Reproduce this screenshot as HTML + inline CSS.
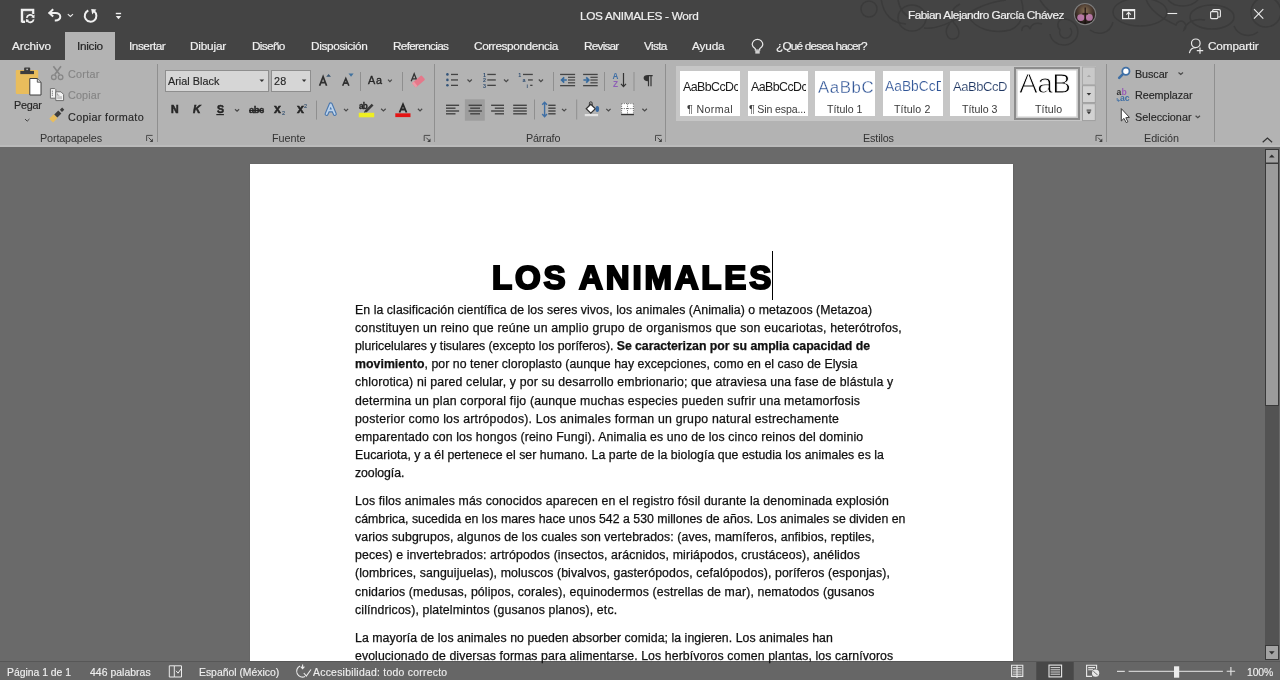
<!DOCTYPE html><html><head><meta charset="utf-8">
<style>
*{margin:0;padding:0;box-sizing:border-box}
html,body{width:1280px;height:680px;overflow:hidden;background:#6a6a6a;font-family:"Liberation Sans",sans-serif}
.a{position:absolute}
.t{position:absolute;white-space:nowrap;line-height:1;will-change:transform}
#titlebar{left:0;top:0;width:1280px;height:60px;background:#444444}
#ribbon{left:0;top:60px;width:1280px;height:87px;background:#b3b3b3}
#doc{left:0;top:147px;width:1265px;height:514px;background:#6a6a6a}
#page{left:250px;top:164px;width:763px;height:497px;background:#fff;box-shadow:0 0 1.5px 0.5px rgba(0,0,0,0.18)}
#status{left:0;top:661px;width:1280px;height:19px;background:#666666;border-top:1px solid #575757}
.tab{color:#f0f0f0;font-size:11.8px;-webkit-text-stroke:0.2px #f0f0f0}
.rb{color:#262626;font-size:10.8px;-webkit-text-stroke:0.15px #262626}
.dis{color:#858585;-webkit-text-stroke:0.15px #858585}
.gl{color:#333333;font-size:10.8px}
.body{color:#101010;font-size:12.3px;-webkit-text-stroke:0.25px #101010}
#lines{will-change:transform;position:absolute;left:0;top:0;width:1280px;height:680px}
.st{color:#efefef;font-size:10.4px;-webkit-text-stroke:0.15px #efefef}
.box{position:absolute;background:#d6d6d6;border:1px solid #8e8e8e}
.tile{position:absolute;background:#fff;width:60px;height:45px;top:71px}
.sn{color:#3a3a3a;font-size:10.6px}
.smp{font-size:12.4px;color:#1a1a1a}
</style></head><body>
<div id="titlebar" class="a"></div>
<svg class="a" style="left:0;top:0" width="1280" height="60" viewBox="0 0 1280 60">
<g fill="none" stroke="#3b3b3b" stroke-width="1.5">
<circle cx="869" cy="9" r="8"></circle>
<path d="M881,-2 C883,14 892,23 906,24"></path>
<ellipse cx="912" cy="18" rx="14" ry="13"></ellipse>
<path d="M898,0 C900,10 905,16 912,18"></path>
<path d="M950,23 C943,31 947,40 954,39 C960,38 961,30 954,23 C948,16 952,8 960,4"></path>
<path d="M924,28 C940,30 958,18 978,8 C988,3 998,1 1006,0"></path>
<path d="M968,16 C976,30 994,34 1010,30 C1021,26 1026,14 1021,-1"></path>
<path d="M1022,31 A4,4 0 1 1 1030,29 C1031,24 1036,22 1042,24"></path>
<path d="M1050,34 A14,13 0 1 0 1064,19 C1058,19 1056,25 1060,30 A6,6 0 1 0 1070,28"></path>
<path d="M1040,0 C1046,10 1054,16 1064,19"></path>
<ellipse cx="1140" cy="12" rx="27" ry="14"></ellipse>
<path d="M1146,-1 C1150,12 1165,20 1176,25 A5,5 0 1 1 1184,30 C1186,22 1195,18 1205,20"></path>
<ellipse cx="1212" cy="17" rx="22" ry="12"></ellipse>
<path d="M1168,0 C1175,8 1190,8 1198,0"></path>
<circle cx="1266" cy="12" r="15"></circle>
<path d="M1234,26 C1238,36 1250,38 1258,32"></path>
<path d="M1090,30 C1098,36 1110,34 1113,22"></path>
</g>
</svg>

<div id="ribbon" class="a"></div>
<div id="doc" class="a"></div>
<div class="a" style="left:0;top:145px;width:1280px;height:1.5px;background:#bbbbbb"></div>
<div id="page" class="a"></div>
<div id="status" class="a"></div>

<!-- tabs -->
<div class="a" style="left:65px;top:32px;width:50px;height:28px;background:#b3b3b3"></div>
<div class="t tab" style="left: 12px; top: 41px; letter-spacing: -0.041px;">Archivo</div>
<div class="t tab" style="left: 76.5px; top: 41px; color: rgb(38, 38, 38); -webkit-text-stroke: 0.2px rgb(38, 38, 38); letter-spacing: -0.289px;">Inicio</div>
<div class="t tab" style="left: 128.5px; top: 41px; letter-spacing: -0.457px;">Insertar</div>
<div class="t tab" style="left: 190.4px; top: 41px; letter-spacing: -0.196px;">Dibujar</div>
<div class="t tab" style="left: 251.6px; top: 41px; letter-spacing: -0.667px;">Diseño</div>
<div class="t tab" style="left: 310.9px; top: 41px; letter-spacing: -0.353px;">Disposición</div>
<div class="t tab" style="left: 392.8px; top: 41px; letter-spacing: -0.705px;">Referencias</div>
<div class="t tab" style="left: 474px; top: 41px; letter-spacing: -0.389px;">Correspondencia</div>
<div class="t tab" style="left: 584.1px; top: 41px; letter-spacing: -0.783px;">Revisar</div>
<div class="t tab" style="left: 643.8px; top: 41px; letter-spacing: -0.654px;">Vista</div>
<div class="t tab" style="left: 692px; top: 41px; letter-spacing: -0.162px;">Ayuda</div>
<div class="t tab" style="left: 776.3px; top: 41px; letter-spacing: -0.799px;">¿Qué desea hacer?</div>
<div class="t tab" style="left: 1207.8px; top: 40.8px; letter-spacing: -0.15px;">Compartir</div>

<!-- title -->
<div class="t tab" style="left: 580.4px; top: 11px; letter-spacing: -0.314px;">LOS ANIMALES - Word</div>
<div class="t tab" style="left: 908px; top: 9.8px; letter-spacing: -0.486px;">Fabian Alejandro García Chávez</div>

<!-- ribbon: clipboard -->
<div class="t rb" style="left: 13.8px; letter-spacing: -0.253px; top: 100px;">Pegar</div>
<div class="t rb dis" style="left: 67.9px; letter-spacing: 0.26px; top: 68.6px;">Cortar</div>
<div class="t rb dis" style="left: 67.9px; letter-spacing: 0.158px; top: 90px;">Copiar</div>
<div class="t rb" style="left: 67.9px; letter-spacing: 0.329px; top: 111.9px;">Copiar formato</div>
<div class="t gl" style="left: 39.7px; letter-spacing: -0.14px; top: 133.1px;">Portapapeles</div>

<!-- font -->
<div class="box" style="left:165px;top:70px;width:104px;height:22px"></div>
<div class="box" style="left:271px;top:70px;width:40px;height:22px"></div>
<div class="t rb" style="left: 167.8px; letter-spacing: 0.028px; top: 75.9px;">Arial Black</div>
<div class="t rb" style="left: 273.9px; letter-spacing: 0.184px; top: 75.9px;">28</div>
<div class="t gl" style="left: 272.1px; letter-spacing: -0.045px; top: 133.3px;">Fuente</div>
<div class="t gl" style="left: 526px; letter-spacing: -0.168px; top: 133.1px;">Párrafo</div>

<!-- styles -->
<div class="a" style="left:676px;top:66px;width:420px;height:55px;background:#c6c6c6"></div>
<div class="tile" style="left:680px"></div>
<div class="tile" style="left:748px"></div>
<div class="tile" style="left:815px"></div>
<div class="tile" style="left:883px"></div>
<div class="tile" style="left:950px"></div>
<div class="a" style="left:1014px;top:67px;width:66px;height:53px;background:#fff;border:2px solid #8c8c8c;box-shadow:inset 0 0 0 1.6px #cccccc"></div>
<div class="t sn" style="left: 687.3px; letter-spacing: 0.417px; top: 104.3px;">¶ Normal</div>
<div class="t sn" style="left: 749.2px; letter-spacing: -0.142px; top: 104.3px;">¶ Sin espa...</div>
<div class="t sn" style="left: 826.9px; letter-spacing: 0.022px; top: 104.3px;">Título 1</div>
<div class="t sn" style="left: 894.3px; letter-spacing: 0.151px; top: 104.3px;">Título 2</div>
<div class="t sn" style="left: 962.2px; letter-spacing: 0.022px; top: 104.3px;">Título 3</div>
<div class="t sn" style="left: 1034.7px; letter-spacing: 0.14px; top: 104.3px;">Título</div>
<div class="a" style="left:683px;top:76px;width:55px;height:20px;overflow:hidden"><div class="t smp" style="left: 0px; letter-spacing: -0.573px; top: 5px;">AaBbCcDc</div></div>
<div class="a" style="left:751px;top:76px;width:55px;height:20px;overflow:hidden"><div class="t smp" style="left: 0px; letter-spacing: -0.573px; top: 5px;">AaBbCcDc</div></div>
<div class="a" style="left:818px;top:74px;width:55.5px;height:22px;overflow:hidden"><div class="t smp" style="left: 0px; font-size: 16.8px; color: rgb(47, 84, 150); -webkit-text-stroke: 0.3px rgb(255, 255, 255); letter-spacing: 0.607px; top: 5.7px;">AaBbCc</div></div>
<div class="a" style="left:885px;top:76px;width:55.5px;height:20px;overflow:hidden"><div class="t smp" style="left: 0px; font-size: 13.8px; color: rgb(47, 84, 150); -webkit-text-stroke: 0.2px rgb(255, 255, 255); letter-spacing: 0.004px; top: 3.8px;">AaBbCcD</div></div>
<div class="a" style="left:953px;top:76px;width:55px;height:20px;overflow:hidden"><div class="t smp" style="left: 0px; font-size: 13px; color: rgb(31, 55, 99); -webkit-text-stroke: 0.15px rgb(255, 255, 255); letter-spacing: -0.446px; top: 3.8px;">AaBbCcD</div></div>
<div class="a" style="left:1018px;top:71px;width:54px;height:24px;overflow:hidden"><div class="t smp" style="left: 1.2px; letter-spacing: -0.6px; font-size: 28.2px; color: rgb(0, 0, 0); -webkit-text-stroke: 0.9px rgb(255, 255, 255); top: -2px;">AaBb</div></div>
<div class="t gl" style="left: 863px; letter-spacing: -0.135px; top: 133.2px;">Estilos</div>

<!-- editing -->
<div class="t rb" style="left: 1135.2px; letter-spacing: -0.082px; top: 69px;">Buscar</div>
<div class="t rb" style="left: 1135.2px; letter-spacing: -0.08px; top: 90.1px;">Reemplazar</div>
<div class="t rb" style="left: 1135.2px; letter-spacing: 0.008px; top: 111.7px;">Seleccionar</div>
<div class="t gl" style="left: 1143.6px; letter-spacing: -0.07px; top: 133.3px;">Edición</div>

<!-- status -->
<div class="t st" style="left: 6.9px; letter-spacing: -0.012px; top: 668.3px;">Página 1 de 1</div>
<div class="t st" style="left: 90px; letter-spacing: 0.046px; top: 668.3px;">446 palabras</div>
<div class="t st" style="left: 198.8px; letter-spacing: -0.005px; top: 668.3px;">Español (México)</div>
<div class="t st" style="left: 312.8px; letter-spacing: 0.261px; top: 668.3px;">Accesibilidad: todo correcto</div>
<div class="t st" style="left: 1247.1px; letter-spacing: -0.126px; top: 668.3px;">100%</div>

<!-- font glyphs -->
<div class="t rb" style="left: 170.8px; font-weight: bold; font-size: 10.6px; -webkit-text-stroke: 0.55px rgb(38, 38, 38); letter-spacing: 1.144px; top: 104px;">N</div>
<div class="t rb" style="left: 193.4px; font-weight: bold; font-style: italic; font-size: 10.6px; -webkit-text-stroke: 0.55px rgb(38, 38, 38); letter-spacing: 0.544px; top: 104px;">K</div>
<div class="t rb" style="left: 217.1px; font-weight: bold; font-size: 10.6px; -webkit-text-stroke: 0.5px rgb(38, 38, 38); letter-spacing: -0.278px; top: 104px;">S</div>
<div class="t rb" style="left: 249.1px; font-weight: bold; font-size: 9.4px; letter-spacing: -0.428px; text-decoration: line-through; -webkit-text-stroke: 0.4px rgb(38, 38, 38); top: 105px;">abc</div>
<div class="t rb" style="left: 274.3px; font-weight: bold; font-size: 12.4px; -webkit-text-stroke: 0.5px rgb(38, 38, 38); letter-spacing: 0.194px; top: 103px;">x</div>
<div class="t rb" style="left: 281.9px; font-size: 5.6px; color: rgb(61, 111, 165); letter-spacing: 0.775px; top: 110.8px;">2</div>
<div class="t rb" style="left: 296.6px; font-weight: bold; font-size: 12.4px; -webkit-text-stroke: 0.5px rgb(38, 38, 38); letter-spacing: 0.094px; top: 103px;">x</div>
<div class="t rb" style="left: 304.2px; font-size: 5.6px; color: rgb(61, 111, 165); letter-spacing: 0.375px; top: 103.7px;">2</div>
<div class="t rb" style="left: 367.7px; font-size: 10.8px; -webkit-text-stroke: 0.35px rgb(38, 38, 38); letter-spacing: 0.781px; top: 74.8px;">Aa</div>
<div class="t rb" style="left: 358.6px; font-weight: bold; font-size: 8.2px; letter-spacing: -0.8px; -webkit-text-stroke: 0.3px rgb(38, 38, 38); top: 102.7px;">ab</div>

<!-- heading -->
<div class="t" id="head" style="left: 492.4px; font-size: 33px; font-weight: bold; color: rgb(0, 0, 0); -webkit-text-stroke: 2.1px rgb(0, 0, 0); letter-spacing: 2.825px; top: 260.6px;">LOS ANIMALES</div>
<div class="a" style="left:772px;top:251px;width:1px;height:49px;background:#000"></div>

<!-- page text -->
<div id="lines">
<div class="t body" style="left: 355.4px; top: 304px; letter-spacing: 0.069px;">En la clasificación científica de los seres vivos, los animales (Animalia) o metazoos (Metazoa)</div>
<div class="t body" style="left: 355.4px; top: 322.1px; letter-spacing: 0.204px;">constituyen un reino que reúne un amplio grupo de organismos que son eucariotas, heterótrofos,</div>
<div class="t body" style="left: 355.4px; top: 340.2px; letter-spacing: -0.04px;">pluricelulares y tisulares (excepto los poríferos). <b>Se caracterizan por su amplia capacidad de</b></div>
<div class="t body" style="left: 355.4px; top: 358.3px; letter-spacing: 0.048px;"><b>movimiento</b>, por no tener cloroplasto (aunque hay excepciones, como en el caso de Elysia</div>
<div class="t body" style="left: 355.4px; top: 376.4px; letter-spacing: 0.148px;">chlorotica) ni pared celular, y por su desarrollo embrionario; que atraviesa una fase de blástula y</div>
<div class="t body" style="left: 355.4px; top: 394.5px; letter-spacing: 0.191px;">determina un plan corporal fijo (aunque muchas especies pueden sufrir una metamorfosis</div>
<div class="t body" style="left: 355.4px; top: 412.6px; letter-spacing: 0.227px;">posterior como los artrópodos). Los animales forman un grupo natural estrechamente</div>
<div class="t body" style="left: 355.4px; top: 430.7px; letter-spacing: 0.127px;">emparentado con los hongos (reino Fungi). Animalia es uno de los cinco reinos del dominio</div>
<div class="t body" style="left: 355.4px; top: 448.8px; letter-spacing: 0.048px;">Eucariota, y a él pertenece el ser humano. La parte de la biología que estudia los animales es la</div>
<div class="t body" style="left: 355.4px; top: 466.9px; letter-spacing: -0.065px;">zoología.</div>
<div class="t body" style="left: 355.4px; top: 495px; letter-spacing: 0.124px;">Los filos animales más conocidos aparecen en el registro fósil durante la denominada explosión</div>
<div class="t body" style="left: 355.4px; top: 513.1px; letter-spacing: 0.016px;">cámbrica, sucedida en los mares hace unos 542 a 530 millones de años. Los animales se dividen en</div>
<div class="t body" style="left: 355.4px; top: 531.2px; letter-spacing: 0.09px;">varios subgrupos, algunos de los cuales son vertebrados: (aves, mamíferos, anfibios, reptiles,</div>
<div class="t body" style="left: 355.4px; top: 549.3px; letter-spacing: 0.129px;">peces) e invertebrados: artrópodos (insectos, arácnidos, miriápodos, crustáceos), anélidos</div>
<div class="t body" style="left: 355.4px; top: 567.4px; letter-spacing: 0.104px;">(lombrices, sanguijuelas), moluscos (bivalvos, gasterópodos, cefalópodos), poríferos (esponjas),</div>
<div class="t body" style="left: 355.4px; top: 585.5px; letter-spacing: 0.122px;">cnidarios (medusas, pólipos, corales), equinodermos (estrellas de mar), nematodos (gusanos</div>
<div class="t body" style="left: 355.4px; top: 603.6px; letter-spacing: 0.135px;">cilíndricos), platelmintos (gusanos planos), etc.</div>
<div class="t body" style="left: 355.4px; top: 631.7px; letter-spacing: 0.05px;">La mayoría de los animales no pueden absorber comida; la ingieren. Los animales han</div>
<div class="t body" style="left: 355.4px; top: 649.8px; letter-spacing: 0.091px;">evolucionado de diversas formas para alimentarse. Los herbívoros comen plantas, los carnívoros</div>

</div>

<!-- icons -->
<svg class="a" style="left:0;top:0" width="1280" height="680" viewBox="0 0 1280 680">
<!-- QAT -->
<g fill="none" stroke="#f0f0f0" stroke-width="2.4">
<path d="M22,22.6 V10 H33.1 V14"></path>
<path d="M22,21.8 H25"></path>
</g>
<rect x="24.2" y="11.3" width="7.5" height="2.8" fill="none" stroke="#5e5e5e" stroke-width="0.8"></rect>
<circle cx="30.2" cy="18.6" r="5.3" fill="#444"></circle>
<g fill="none" stroke="#f0f0f0" stroke-width="1.8">
<path d="M26.7,17.8 A3.6,3.6 0 0 1 33.3,16.6"></path>
<path d="M33.7,19.4 A3.6,3.6 0 0 1 27.1,20.6"></path>
</g>
<path d="M34.6,14.6 L34.4,18.2 L31.2,17.3 Z" fill="#f0f0f0"></path>
<path d="M25.8,22.6 L26,19 L29.2,19.9 Z" fill="#f0f0f0"></path>
<g fill="none" stroke="#f0f0f0" stroke-width="2" stroke-linejoin="miter">
<path d="M48.8,12.9 H55.6 A4.7,3.8 0 0 1 55.6,20.5 H54.8"></path>
<path d="M53.2,9.2 L49.3,12.9 L53.2,16.6"></path>
</g>
<path d="M67.8,14.1 L70.4,16.5 L73,14.1" fill="none" stroke="#e8e8e8" stroke-width="1.1"></path>
<path d="M88.3,10.5 A5.8,5.8 0 1 0 94.2,11.3" fill="none" stroke="#f0f0f0" stroke-width="2"></path>
<path d="M91.2,9.1 L96.4,9.5 L92.2,14.4 Z" fill="#f0f0f0"></path>
<rect x="115.8" y="12.8" width="5.3" height="1.4" fill="#f0f0f0"></rect>
<path d="M115.8,16 H121.2 L118.5,19.2 Z" fill="#f0f0f0"></path>
<!-- avatar -->
<defs><radialGradient id="avg" cx="0.5" cy="0.35" r="0.6"><stop offset="0" stop-color="#8b7355"></stop><stop offset="0.6" stop-color="#4a3a30"></stop><stop offset="1" stop-color="#1e1816"></stop></radialGradient></defs>
<circle cx="1085" cy="14.1" r="11.2" fill="#7e7e7e"></circle>
<circle cx="1085" cy="14.1" r="10.2" fill="url(#avg)"></circle>
<ellipse cx="1080.8" cy="17.6" rx="3.6" ry="3.4" fill="#c982b8" opacity="0.85"></ellipse>
<ellipse cx="1089.4" cy="17.4" rx="3.4" ry="3.4" fill="#c982b8" opacity="0.85"></ellipse>
<path d="M1085.2,7.5 V23.5 M1082.4,13.8 H1088" stroke="#1c1010" stroke-width="1.2"></path>
<!-- window controls -->
<rect x="1122.6" y="9.6" width="12" height="9" fill="none" stroke="#eaeaea" stroke-width="1.2"></rect>
<rect x="1122.6" y="9.2" width="12" height="2" fill="#eaeaea"></rect>
<path d="M1128.6,12.5 V18.5 M1126.4,14.6 L1128.6,12.4 L1130.8,14.6" fill="none" stroke="#eaeaea" stroke-width="1.1"></path>
<path d="M1167.5,13.5 H1177.2" stroke="#eaeaea" stroke-width="1.1"></path>
<rect x="1210.6" y="11.6" width="7.2" height="7" rx="1" fill="none" stroke="#eaeaea" stroke-width="1.1"></rect>
<path d="M1212.6,11.4 V10.8 Q1212.6,9.6 1213.8,9.6 H1219 Q1220.4,9.6 1220.4,11 V16 Q1220.4,17 1219.4,17 H1218" fill="none" stroke="#eaeaea" stroke-width="1.1"></path>
<path d="M1254,9.2 L1263.3,18.6 M1263.3,9.2 L1254,18.6" stroke="#eaeaea" stroke-width="1.15"></path>
<!-- lightbulb -->
<g fill="none" stroke="#e8e8e8" stroke-width="1.2">
<path d="M755.3,50.2 V48.8 Q752.2,46.8 752.2,44.6 A5.3,5.3 0 0 1 762.8,44.6 Q762.8,46.8 759.7,48.8 V50.2 Z"></path>
</g>
<rect x="755.3" y="51" width="4.4" height="2.6" fill="#d0d0d0"></rect>
<!-- share -->
<g fill="none" stroke="#e8e8e8" stroke-width="1.2">
<circle cx="1195.8" cy="43.3" r="4.3"></circle>
<path d="M1189.4,53.2 Q1190.4,47.8 1195.6,47.7"></path>
<path d="M1196.8,50.6 H1203.2 M1200,47.4 V53.8"></path>
</g>

<!-- ===== RIBBON ===== -->
<g fill="#8f8f8f">
<rect x="157" y="64" width="1" height="78"></rect>
<rect x="434" y="64" width="1" height="78"></rect>
<rect x="665" y="64" width="1" height="78"></rect>
<rect x="1106" y="64" width="1" height="78"></rect>
<rect x="1214" y="64" width="1" height="78"></rect>
<rect x="360" y="72" width="1" height="19"></rect>
<rect x="402" y="72" width="1" height="19"></rect>
<rect x="316" y="100.6" width="1" height="19"></rect>
<rect x="553" y="72" width="1" height="19"></rect>
<rect x="604" y="72" width="1" height="19"></rect>
<rect x="633.5" y="72" width="1" height="19"></rect>
<rect x="534" y="99.5" width="1" height="20"></rect>
<rect x="576.2" y="99.5" width="1" height="20"></rect>
</g>
<!-- clipboard -->
<rect x="15.8" y="70" width="22.4" height="24" rx="1" fill="#e9bd5c"></rect>
<rect x="20.3" y="70.9" width="13.7" height="3.2" fill="#3d3d3d"></rect>
<rect x="24.1" y="67.6" width="6.1" height="3.8" rx="0.8" fill="#3d3d3d"></rect>
<rect x="26.3" y="68.7" width="1.7" height="1.4" fill="#b3b3b3"></rect>
<path d="M29.8,78.5 H37.3 L41,82.2 V95 H29.8 Z" fill="#fff" stroke="#3d3d3d" stroke-width="1"></path>
<path d="M37.3,78.5 V82.2 H41" fill="#d8d8d8" stroke="#3d3d3d" stroke-width="0.8"></path>
<path d="M25,119 L27.2,121.2 L29.4,119" fill="none" stroke="#444" stroke-width="1"></path>
<g fill="none" stroke="#868686">
<path d="M53.4,66.2 L59.6,74.6 M61,66.2 L54.8,74.6" stroke-width="1.6"></path>
<circle cx="53.8" cy="77.2" r="2.3" stroke-width="1.3"></circle>
<circle cx="60.6" cy="77.2" r="2.3" stroke-width="1.3"></circle>
</g>
<path d="M50.4,88.6 H54.8 L55.8,89.6 V98.2 H50.4 Z" fill="#f4f4f4" stroke="#6e6e6e" stroke-width="1"></path>
<path d="M51.8,91.2 H53 M51.8,93.2 H53 M51.8,95.2 H53" stroke="#6e6e6e" stroke-width="1"></path>
<path d="M55.8,91.8 H61 L63.6,94.4 V100.6 H55.8 Z" fill="#f4f4f4" stroke="#6e6e6e" stroke-width="1"></path>
<path d="M57.4,93.4 V95.2 H59.4" fill="none" stroke="#8a8a8a" stroke-width="0.8"></path>
<rect x="57.2" y="96.2" width="4.8" height="3" fill="#c4c4c4"></rect>
<path d="M51.2,120.6 L55.6,116.2" stroke="#e9bd5c" stroke-width="5.4"></path>
<path d="M55.8,116 L59.8,112" stroke="#3d3d3d" stroke-width="4.4"></path>
<path d="M60.9,110.9 L63.2,108.6" stroke="#3d3d3d" stroke-width="3"></path>
<!-- launchers -->
<path d="M146.6,141.0 V135.4 H152.6" fill="none" stroke="#404040" stroke-width="0.9"></path>
<path d="M148.6,137.6 L151.79999999999998,140.8" stroke="#404040" stroke-width="1"></path>
<path d="M152.9,138.6 V141.9 H149.6" fill="#404040"></path>
<path d="M424.2,141.0 V135.4 H430.2" fill="none" stroke="#404040" stroke-width="0.9"></path>
<path d="M426.2,137.6 L429.4,140.8" stroke="#404040" stroke-width="1"></path>
<path d="M430.5,138.6 V141.9 H427.2" fill="#404040"></path>
<path d="M655.5,141.0 V135.4 H661.5" fill="none" stroke="#404040" stroke-width="0.9"></path>
<path d="M657.5,137.6 L660.7,140.8" stroke="#404040" stroke-width="1"></path>
<path d="M661.8,138.6 V141.9 H658.5" fill="#404040"></path>
<path d="M1096,141.0 V135.4 H1102" fill="none" stroke="#404040" stroke-width="0.9"></path>
<path d="M1098,137.6 L1101.2,140.8" stroke="#404040" stroke-width="1"></path>
<path d="M1102.3,138.6 V141.9 H1099" fill="#404040"></path>
<!-- font combo triangles -->
<path d="M259.5,79.6 H264.2 L261.85,82.1 Z" fill="#333"></path>
<path d="M301.9,79.6 H306.3 L304.1,82.1 Z" fill="#333"></path>
<!-- grow/shrink -->
<path d="M319.6,85.8 L323.1,76.6 L326.6,85.8 M320.9,82.7 H325.3" fill="none" stroke="#303030" stroke-width="1.7"></path>
<path d="M326.2,76.8 H331 L328.6,74 Z" fill="#3a5672"></path>
<path d="M342.7,85.8 L345.8,78.6 L348.9,85.8 M343.8,83.1 H347.8" fill="none" stroke="#303030" stroke-width="1.6"></path>
<path d="M348.5,73.6 H353.6 L351.05,76.8 Z" fill="#41729f"></path>
<!-- clear formatting -->
<path d="M411.2,81.3 L414.2,73.8 L417.2,81.3 M412.3,78.8 H416.1" fill="none" stroke="#333" stroke-width="1.3"></path>
<g transform="translate(418.6,81.4) rotate(-40)"><rect x="-6.2" y="-2.9" width="12.4" height="5.8" rx="1" fill="#e5788a"></rect><rect x="-6.2" y="-2.9" width="2.4" height="5.8" fill="#ee9aa6"></rect></g>
<!-- chevrons -->
<g fill="none" stroke="#4a4a4a" stroke-width="1.2">
<path d="M235,109.2 L237.05,111.1 L239.1,109.2"></path>
<path d="M388,79.6 L389.9,81.6 L391.8,79.6"></path>
<path d="M344,108.8 L346.05,110.9 L348.1,108.8"></path>
<path d="M381.1,108.8 L383.4,110.9 L385.7,108.8"></path>
<path d="M417.9,108.8 L420.05,110.9 L422.2,108.8"></path>
<path d="M467.5,79.5 L469.65,81.7 L471.8,79.5"></path>
<path d="M504,79.5 L506.2,81.7 L508.4,79.5"></path>
<path d="M538.8,79.5 L540.9,81.7 L543,79.5"></path>
<path d="M562,108.8 L564.15,111 L566.3,108.8"></path>
<path d="M606.3,108.8 L608.45,111 L610.6,108.8"></path>
<path d="M642.4,108.8 L644.65,111 L646.9,108.8"></path>
<path d="M1178.5,72.5 L1180.75,74.4 L1183,72.5"></path>
<path d="M1195.6,115.8 L1197.8,117.7 L1200,115.8"></path>
</g>
<!-- S underline, strike -->
<rect x="216.3" y="114" width="7.6" height="1.2" fill="#262626"></rect>
<!-- text effects A -->
<path d="M326.6,114 L330.7,104.4 L334.8,114 M328.2,110.4 H333.2" fill="none" stroke="#4a77ad" stroke-width="4" stroke-linejoin="round" stroke-linecap="round"></path>
<path d="M326.6,114 L330.7,104.4 L334.8,114 M328.2,110.4 H333.2" fill="none" stroke="#bcd3ec" stroke-width="1.8" stroke-linejoin="round" stroke-linecap="round"></path>
<!-- highlight -->
<path d="M365.6,111.6 L372.6,104.6" stroke="#3a3a3a" stroke-width="2.6"></path>
<path d="M364.3,112.4 L366.3,110.4" stroke="#3a3a3a" stroke-width="1.4"></path>
<rect x="358.8" y="112.8" width="15.4" height="4.5" fill="#eeee22"></rect>
<!-- font color -->
<path d="M399.5,112.5 L403,104.3 L406.5,112.5 M400.8,109.5 H405.2" fill="none" stroke="#262626" stroke-width="1.8"></path>
<rect x="395.3" y="113.3" width="15.2" height="3.8" fill="#e41414"></rect>
<!-- bullets -->
<g fill="#34557a"><circle cx="447.4" cy="74.4" r="1.3"></circle><circle cx="447.4" cy="79.9" r="1.3"></circle><circle cx="447.4" cy="85.3" r="1.3"></circle></g>
<g fill="#444">
<rect x="451" y="73.8" width="7" height="1.3"></rect><rect x="451" y="79.3" width="7" height="1.3"></rect><rect x="451" y="84.7" width="7" height="1.3"></rect>
<rect x="487.3" y="73.8" width="8.5" height="1.3"></rect><rect x="487.3" y="79.3" width="8.5" height="1.3"></rect><rect x="487.3" y="84.7" width="8.5" height="1.3"></rect>
<rect x="523" y="73.8" width="9.8" height="1.3"></rect><rect x="528" y="79.3" width="4.8" height="1.3"></rect><rect x="530.2" y="84.7" width="2.3" height="1.3"></rect>
</g>
<g fill="#2f4d70" font-family="Liberation Sans" font-weight="bold" font-size="5.4">
<text x="483" y="76.6">1</text><text x="483" y="82.1">2</text><text x="483" y="87.5">3</text>
<text x="518.3" y="76.6">1</text><text x="522.6" y="82.1">a</text><text x="526.4" y="87.5">i</text>
</g>
<!-- indents -->
<g fill="#444">
<rect x="560.1" y="73.8" width="15" height="1.3"></rect><rect x="560.1" y="85" width="15" height="1.3"></rect>
<rect x="568" y="76.7" width="7.1" height="1.2"></rect><rect x="568" y="79.4" width="7.1" height="1.2"></rect><rect x="568" y="82.2" width="7.1" height="1.2"></rect>
<rect x="583.1" y="73.8" width="14.6" height="1.3"></rect><rect x="583.1" y="85" width="14.6" height="1.3"></rect>
<rect x="590.4" y="76.7" width="7.3" height="1.2"></rect><rect x="590.4" y="79.4" width="7.3" height="1.2"></rect><rect x="590.4" y="82.2" width="7.3" height="1.2"></rect>
</g>
<g fill="none" stroke="#356a9e" stroke-width="1.7">
<path d="M566.8,80 H561.8 M564.2,77.4 L561.6,80 L564.2,82.6"></path>
<path d="M583.4,80 H588.6 M586.2,77.4 L588.8,80 L586.2,82.6"></path>
</g>
<!-- sort -->
<g font-family="Liberation Sans" font-weight="bold" font-size="8.2">
<text x="612.6" y="79.4" fill="#3f6fa5">A</text><text x="612.9" y="86.7" fill="#8e5fb6">Z</text>
</g>
<path d="M623.5,73 V86.4 M621,83.8 L623.5,86.6 L626,83.8" fill="none" stroke="#333" stroke-width="1.2"></path>
<!-- pilcrow -->
<path d="M648,75 H652.7 V76.3 H651.6 V86.2 H650.4 V76.3 H649.1 V86.2 H647.9 V81.2 Q643.6,81.2 643.6,78.1 Q643.6,75 648,75 Z" fill="#333"></path>
<!-- align -->
<rect x="464.9" y="99.3" width="19.9" height="21.4" fill="#9d9d9d"></rect>
<g fill="#444">
<rect x="446" y="104.6" width="13.1" height="1.4"></rect><rect x="446" y="107.5" width="9.5" height="1.4"></rect><rect x="446" y="110.3" width="13.1" height="1.4"></rect><rect x="446" y="113.1" width="9.5" height="1.4"></rect>
<rect x="468.6" y="104.6" width="13.3" height="1.4"></rect><rect x="470.2" y="107.5" width="9.8" height="1.4"></rect><rect x="468.6" y="110.3" width="13.3" height="1.4"></rect><rect x="470.2" y="113.1" width="9.8" height="1.4"></rect>
<rect x="491.1" y="104.6" width="12.9" height="1.4"></rect><rect x="494.8" y="107.5" width="9.2" height="1.4"></rect><rect x="491.1" y="110.3" width="12.9" height="1.4"></rect><rect x="494.8" y="113.1" width="9.2" height="1.4"></rect>
<rect x="513.2" y="104.6" width="13.6" height="1.4"></rect><rect x="513.2" y="107.5" width="13.6" height="1.4"></rect><rect x="513.2" y="110.3" width="13.6" height="1.4"></rect><rect x="513.2" y="113.1" width="13.6" height="1.4"></rect>
<rect x="548.3" y="104.6" width="7.3" height="1.4"></rect><rect x="548.3" y="107.5" width="7.3" height="1.4"></rect><rect x="548.3" y="110.3" width="7.3" height="1.4"></rect><rect x="548.3" y="113.1" width="7.3" height="1.4"></rect>
</g>
<path d="M544.6,102.8 V116 M542.2,104.8 L544.6,102.2 L547,104.8 M542.2,114 L544.6,116.6 L547,114" fill="none" stroke="#3f6fa5" stroke-width="1.4"></path>
<!-- shading -->
<rect x="584.8" y="114" width="13.3" height="2.2" fill="#e4e4e4"></rect>
<path d="M589.4,107 V103.2 Q589.4,101.8 590.8,101.8 Q592.2,101.8 592.2,103.2 V106" fill="none" stroke="#333" stroke-width="1"></path>
<path d="M590.8,104.2 L595.4,108.7 L590.8,113.2 L586.2,108.7 Z" fill="#fff" stroke="#333" stroke-width="1.2"></path>
<ellipse cx="597.3" cy="108.9" rx="1.8" ry="3" fill="#3b6aa0"></ellipse>
<!-- borders -->
<rect x="621.3" y="103.2" width="12.4" height="10.8" fill="#fff"></rect>
<g fill="none" stroke="#555" stroke-width="0.9" stroke-dasharray="1,1.2">
<path d="M621.6,103.6 H633.4 M621.6,103.6 V113.6 M633.4,103.6 V113.6 M627.5,103.6 V113.6 M621.6,108.6 H633.4"></path>
</g>
<rect x="621.1" y="113.8" width="12.8" height="1.4" fill="#333"></rect>
<!-- gallery scroll -->
<rect x="1082.5" y="67" width="12.8" height="17.8" fill="#c9c9c9" stroke="#a9a9a9" stroke-width="1"></rect>
<path d="M1086.8,77 H1091 L1088.9,74.8 Z" fill="#a6a6a6"></path>
<rect x="1082.5" y="85.7" width="12.8" height="16.9" fill="#d2d2d2" stroke="#9e9e9e" stroke-width="1"></rect>
<path d="M1086.6,93 H1091.2 L1088.9,95.6 Z" fill="#333"></path>
<rect x="1082.5" y="103.7" width="12.8" height="16.9" fill="#d2d2d2" stroke="#9e9e9e" stroke-width="1"></rect>
<rect x="1086.6" y="109.6" width="4.6" height="1" fill="#333"></rect>
<path d="M1086.6,111.6 H1091.2 L1088.9,114.2 Z" fill="#333"></path>
<!-- editing -->
<path d="M1123.4,73.6 L1119.2,77.8" stroke="#3f6fa5" stroke-width="2.6" stroke-linecap="round"></path>
<circle cx="1125.9" cy="71.2" r="3.6" fill="#fff" stroke="#3f6fa5" stroke-width="1.8"></circle>
<g font-family="Liberation Sans" font-weight="bold" font-size="8.6">
<text x="1116.6" y="94.6" fill="#333">a</text><text x="1121.6" y="94.6" fill="#9a5fb8">b</text>
<text x="1120" y="101.3" fill="#3f6fa5">ac</text>
</g>
<path d="M1117.2,98 V100.6 H1119.4 M1118.2,99.6 L1119.4,100.6 L1118.2,101.6" fill="none" stroke="#3f6fa5" stroke-width="0.8"></path>
<path d="M1121.3,108.6 V121 L1124,118.4 L1126.2,122.6 L1127.9,121.8 L1125.8,117.7 L1129.4,117.4 Z" fill="#fff" stroke="#333" stroke-width="0.95" stroke-linejoin="round"></path>
<path d="M1262.7,142.2 L1267.4,138 L1272.1,142.2" fill="none" stroke="#333" stroke-width="1.2"></path>

<!-- ===== SCROLLBAR ===== -->
<rect x="1265" y="147" width="15" height="514" fill="#6a6a6a"></rect>
<rect x="1265" y="149" width="14" height="511" fill="#535353"></rect>
<rect x="1265.5" y="149.5" width="13" height="13.5" fill="#a3a3a3" stroke="#393939" stroke-width="1"></rect>
<path d="M1269,157.6 H1274.6 L1271.8,154.4 Z" fill="#2e2e2e"></path>
<rect x="1265.5" y="163.5" width="13" height="242" fill="#9b9b9b" stroke="#393939" stroke-width="1"></rect>
<rect x="1265.5" y="645.5" width="13" height="14" fill="#a3a3a3" stroke="#393939" stroke-width="1"></rect>
<path d="M1269,651.2 H1274.6 L1271.8,654.4 Z" fill="#2e2e2e"></path>

<!-- ===== STATUS ===== -->
<g fill="none" stroke="#ececec" stroke-width="1">
<path d="M169.3,665.8 H174.3 V677 H169.3 Z M174.3,665.8 H181.5 V677 H174.3"></path>
<path d="M176,670.8 L178,673.2 L181.8,668"></path>
</g>
<g fill="none" stroke="#ececec" stroke-width="1.1">
<path d="M300,666 A5,5 0 1 0 305,676.5"></path>
<path d="M302.6,664.6 V668.4 M300.8,666.6 L302.6,668.6 L304.4,666.6"></path>
<path d="M303.8,673 L306.3,676 L311,669.5"></path>
</g>
<rect x="1036.3" y="662" width="37.4" height="18" fill="#484848"></rect>
<g fill="none" stroke="#e8e8e8" stroke-width="1.1">
<path d="M1011.6,665.2 H1017 V676.4 H1011.6 Z M1017,665.2 H1022.8 V676.4 H1017 M1017,676 V678"></path>
<path d="M1012.8,667.6 H1021.6 M1012.8,669.8 H1021.6 M1012.8,672 H1021.6 M1012.8,674.2 H1021.6" stroke-width="0.9"></path>
<rect x="1049" y="665.1" width="12.6" height="11.8"></rect>
<path d="M1050.6,667.6 H1060 M1050.6,669.8 H1060 M1050.6,672 H1060 M1050.6,674.2 H1060" stroke-width="0.9"></path>
<path d="M1092,676.4 H1086.6 V665.2 H1096.6 V669.2 M1088.2,667.6 H1095 M1088.2,669.8 H1093"></path>
</g>
<circle cx="1095.6" cy="673.2" r="3.6" fill="#e8e8e8"></circle>
<path d="M1093.4,671.4 Q1095.6,672.8 1097.6,675.2" fill="none" stroke="#666" stroke-width="1"></path>
<rect x="1117" y="670.8" width="7.8" height="1.1" fill="#e6e6e6"></rect>
<rect x="1128.6" y="670.8" width="94.3" height="1" fill="#e6e6e6"></rect>
<rect x="1174" y="666.3" width="5.2" height="11.4" fill="#ececec"></rect>
<path d="M1226.7,671.3 H1235.1 M1230.9,667.1 V675.5" stroke="#e6e6e6" stroke-width="1.1"></path>
</svg>



</body></html>
